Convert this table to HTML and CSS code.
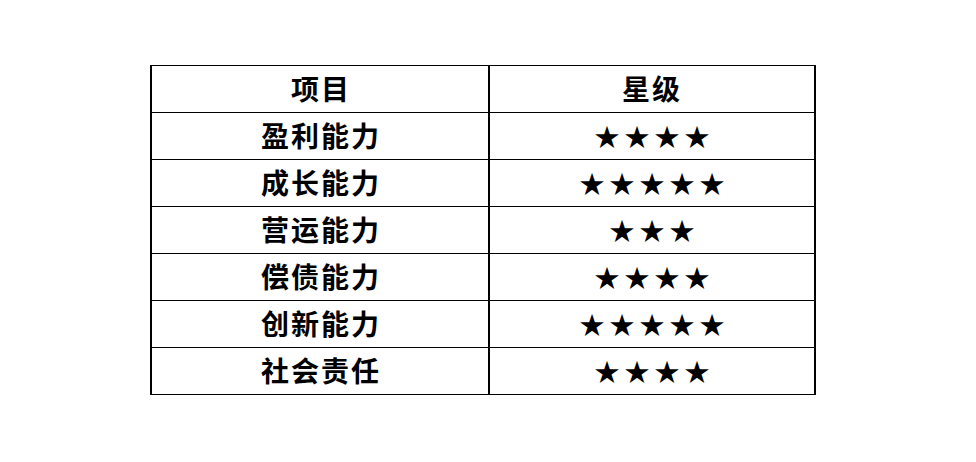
FILE: index.html
```html
<!DOCTYPE html>
<html lang="zh">
<head>
<meta charset="utf-8">
<link rel="stylesheet" href="styles.css">
</head>
<body>
<div class="table">
  <div class="cell c1">项目</div><div class="cell c2">星级</div>
  <div class="cell c1">盈利能力</div><div class="cell c2 stars">★★★★</div>
  <div class="cell c1">成长能力</div><div class="cell c2 stars">★★★★★</div>
  <div class="cell c1">营运能力</div><div class="cell c2 stars">★★★</div>
  <div class="cell c1">偿债能力</div><div class="cell c2 stars">★★★★</div>
  <div class="cell c1">创新能力</div><div class="cell c2 stars">★★★★★</div>
  <div class="cell c1">社会责任</div><div class="cell c2 stars">★★★★</div>
</div>
</body>
</html>
```
FILE: styles.css
```css
html, body {
  margin: 0;
  padding: 0;
  background: #ffffff;
}
body {
  padding: 65px 0 0 150px;
  font-family: "Noto Sans CJK SC", "Noto Sans", sans-serif;
  color: #000;
}
.table {
  display: grid;
  grid-template-columns: 338px 324px;
  width: 666px;
  box-sizing: border-box;
  border-left: 2px solid #000;
  border-right: 2px solid #000;
  border-top: 1px solid #000;
}
.cell {
  box-sizing: border-box;
  height: 47px;
  border-bottom: 1px solid #000;
  display: flex;
  align-items: center;
  justify-content: center;
  font-size: 28px;
  font-weight: 700;
  letter-spacing: 2px;
  line-height: 1;
  padding-bottom: 3px;
}
.c1 {
  border-right: 2px solid #000;
  padding-left: 2px;
}
.stars {
  letter-spacing: 5px;
  padding-left: 5px;
  padding-bottom: 2px;
  font-size: 25px;
  font-weight: 400;
}
```
